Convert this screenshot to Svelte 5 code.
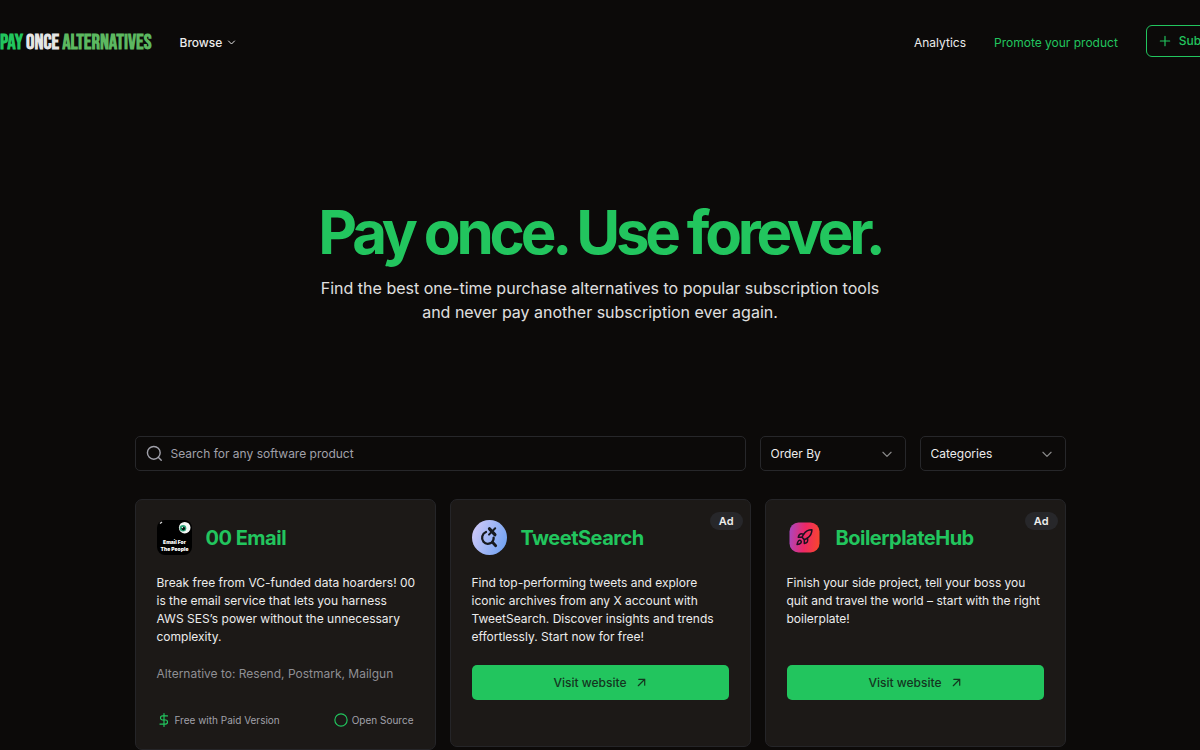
<script lang="ts">
  interface Product {
    name: string;
    logo: 'email' | 'tweet' | 'rocket';
    description: string;
    alternatives?: string;
    pricing?: string;
    openSource?: boolean;
    ad?: boolean;
  }

  const products: Product[] = [
    {
      name: '00 Email',
      logo: 'email',
      description:
        'Break free from VC-funded data hoarders! 00 is the email service that lets you harness AWS SES’s power without the unnecessary complexity.',
      alternatives: 'Resend, Postmark, Mailgun',
      pricing: 'Free with Paid Version',
      openSource: true
    },
    {
      name: 'TweetSearch',
      logo: 'tweet',
      description:
        'Find top-performing tweets and explore iconic archives from any X account with TweetSearch. Discover insights and trends effortlessly. Start now for free!',
      ad: true
    },
    {
      name: 'BoilerplateHub',
      logo: 'rocket',
      description:
        'Finish your side project, tell your boss you quit and travel the world – start with the right boilerplate!',
      ad: true
    }
  ];

  let search = $state('');
  let orderBy = $state('');
  let category = $state('');
</script>

<div class="page">
  <header class="header">
    <a class="brand" href="/"><span class="pay">PAY</span><span class="once">ONCE</span><span class="alt">ALTERNATIVES</span></a>
    <button class="browse" type="button">
      Browse
      <svg width="9" height="9" viewBox="0 0 24 24" class="stroke"><path d="m4 8 8 8 8-8" stroke-width="2.6" /></svg>
    </button>
    <nav class="nav">
      <a class="link" href="/analytics">Analytics</a>
      <a class="link promote" href="/promote">Promote your product</a>
      <a class="submit" href="/submit">
        <svg width="14" height="14" viewBox="0 0 24 24" class="stroke"><path d="M4 12h16M12 4v16" /></svg>
        Submit
      </a>
    </nav>
  </header>

  <main>
    <section class="hero">
      <h1>Pay once. Use forever.</h1>
      <p>Find the best one-time purchase alternatives to popular subscription tools and never pay another subscription ever again.</p>
    </section>

    <div class="filters">
      <label class="search">
        <svg width="17" height="17" viewBox="0 0 24 24" class="stroke"><circle cx="11" cy="11" r="9" /><path d="m21.5 21.5-4.2-4.2" /></svg>
        <input type="text" placeholder="Search for any software product" aria-label="Search" bind:value={search} />
      </label>
      <div class="select">
        <select aria-label="Order By" bind:value={orderBy}>
          <option value="">Order By</option>
          <option value="name">Name</option>
        </select>
        <svg width="14" height="14" viewBox="0 0 24 24" class="stroke"><path d="m5 9 7 7 7-7" /></svg>
      </div>
      <div class="select">
        <select aria-label="Categories" bind:value={category}>
          <option value="">Categories</option>
          <option value="email">Email</option>
        </select>
        <svg width="14" height="14" viewBox="0 0 24 24" class="stroke"><path d="m5 9 7 7 7-7" /></svg>
      </div>
    </div>

    <div class="grid">
      {#each products as product}
        <article class="card">
          {#if product.ad}
            <span class="badge">Ad</span>
          {/if}
          <div class="card-header">
            {#if product.logo === 'email'}
              <svg width="35" height="35" viewBox="0 0 35 35">
                <rect width="35" height="35" rx="8" fill="#000" />
                <path d="M3 3.5 5 2" stroke="#ddd" stroke-width="1.2" />
                <circle cx="27.7" cy="7.7" r="5.8" fill="#f4f7f5" />
                <circle cx="26" cy="8.2" r="3.3" fill="#2fa77c" />
                <circle cx="26.3" cy="8.6" r="1.8" fill="#07130e" />
                <circle cx="25.4" cy="7.6" r="0.7" fill="#fff" />
                <text x="17.5" y="24" class="logo-text">Email For</text>
                <text x="17.5" y="31" class="logo-text">The People</text>
              </svg>
            {:else if product.logo === 'tweet'}
              <svg width="35" height="35" viewBox="0 0 35 35">
                <defs>
                  <linearGradient id="tweet-bg" x1="0" y1="0.3" x2="1" y2="0.7">
                    <stop offset="0" stop-color="#cdc8f8" />
                    <stop offset="1" stop-color="#72a3f2" />
                  </linearGradient>
                </defs>
                <circle cx="17.5" cy="17.5" r="17.5" fill="url(#tweet-bg)" />
                <g fill="none" stroke="#171a20" stroke-width="2.3" stroke-linecap="round">
                  <path d="M14 12a6.3 6.3 0 0 0-2.5 9.8c2.8 3.3 8.4 2.3 9.8-1.8.3-.8.4-1.6.3-2.3" />
                  <path d="m20.5 22.2 3.2 3.5" stroke-width="2.8" />
                  <path d="m17.5 8.8 5.4 5.9" stroke-width="3.2" />
                  <path d="m23.2 8.2-6.2 6.4" stroke-width="2" />
                </g>
              </svg>
            {:else}
              <svg width="35" height="35" viewBox="0 0 35 35">
                <defs>
                  <linearGradient id="rocket-bg" x1="0" y1="0.45" x2="1" y2="0.55">
                    <stop offset="0" stop-color="#ad45bb" />
                    <stop offset="0.5" stop-color="#ed2866" />
                    <stop offset="1" stop-color="#f8452f" />
                  </linearGradient>
                </defs>
                <rect x="2.5" y="2.5" width="30" height="30" rx="9" fill="url(#rocket-bg)" />
                <g transform="translate(8.2 8.2) scale(0.76)" fill="none" stroke="#1c1020" stroke-width="2" stroke-linecap="round" stroke-linejoin="round">
                  <path d="M4.5 16.5c-1.5 1.26-2 5-2 5s3.74-.5 5-2c.71-.84.7-2.13-.09-2.91a2.18 2.18 0 0 0-2.91-.09z" />
                  <path d="m12 15-3-3a22 22 0 0 1 2-3.95A12.88 12.88 0 0 1 22 2c0 2.72-.78 7.5-6 11a22.35 22.35 0 0 1-4 2z" />
                  <path d="M9 12H4s.55-3.03 2-4c1.62-1.08 5 0 5 0" />
                  <path d="M12 15v5s3.03-.55 4-2c1.08-1.62 0-5 0-5" />
                </g>
              </svg>
            {/if}
            <h2>{product.name}</h2>
          </div>

          <p class="description">{product.description}</p>

          {#if product.ad}
            <a class="visit" href="/visit">
              Visit website
              <svg width="11" height="11" viewBox="0 0 24 24" class="stroke"><path d="M5 19 19 5M6 5h13v13" stroke-width="2.6" /></svg>
            </a>
          {:else}
            <p class="alternatives">Alternative to: {product.alternatives}</p>
            <div class="meta">
              <span>
                <svg width="14" height="14" viewBox="0 0 24 24" class="stroke"><path d="M12 1v22M18 5H9.5a3.5 3.5 0 0 0 0 7h5a3.5 3.5 0 0 1 0 7H5" /></svg>
                {product.pricing}
              </span>
              {#if product.openSource}
                <span>
                  <svg width="14" height="14" viewBox="0 0 24 24" class="stroke"><circle cx="12" cy="12" r="10.5" /></svg>
                  Open Source
                </span>
              {/if}
            </div>
          {/if}
        </article>
      {/each}
    </div>
  </main>
</div>

<style>
  :global(body) {
    background: #0c0a09;
  }

  .page {
    overflow: hidden;
    color: #ececec;
    font-family: Inter, sans-serif;
    font-size: 12px;
    line-height: 18px;
  }

  a {
    color: inherit;
    text-decoration: none;
  }

  h1,
  h2,
  p {
    margin: 0;
  }

  button,
  input,
  select {
    color: inherit;
    font: inherit;
    background: none;
    border: none;
    padding: 0;
  }

  svg {
    flex: none;
  }

  .stroke {
    fill: none;
    stroke: currentColor;
    stroke-width: 2;
    stroke-linecap: round;
    stroke-linejoin: round;
  }

  /* Header runs past the right edge of the window */
  .header {
    display: flex;
    align-items: center;
    gap: 28px;
    padding: 25px 0;
    margin-right: -31px;
    white-space: nowrap;
  }

  .brand,
  .browse,
  .link {
    padding-top: 3px;
  }

  .brand {
    display: flex;
    gap: 3px;
    font-family: 'Bebas Neue', 'Roboto Condensed', 'Liberation Sans Narrow', Roboto, sans-serif;
    font-size: 21px;
    font-weight: 700;
  }

  .pay {
    color: #22c55e;
  }

  .once {
    color: #e5e5e5;
  }

  .alt {
    color: #5cb860;
  }

  .browse {
    display: flex;
    align-items: center;
    gap: 5px;
    font-weight: 500;
  }

  .nav {
    display: flex;
    align-items: center;
    gap: 28px;
    margin-left: auto;
  }

  .promote {
    color: #22c55e;
  }

  .submit {
    display: flex;
    align-items: center;
    gap: 7px;
    height: 30px;
    padding: 0 11px;
    border: 1px solid #22c55e;
    border-radius: 6px;
    color: #22c55e;
    font-weight: 500;
  }

  main {
    max-width: 931px;
    margin: 0 auto;
    padding-bottom: 28px;
  }

  .hero {
    padding: 120px 0 112px;
    text-align: center;
  }

  .hero h1 {
    color: #22c55e;
    font-size: 60px;
    font-weight: 700;
    line-height: 60px;
    letter-spacing: -0.07em;
  }

  .hero p {
    max-width: 580px;
    margin: 14px auto 0;
    color: #e0e0e0;
    font-size: 16px;
    line-height: 24px;
  }

  .filters {
    display: flex;
    gap: 14px;
    margin-bottom: 28px;
  }

  .search,
  .select {
    display: flex;
    align-items: center;
    box-sizing: border-box;
    height: 35px;
    border: 1px solid #27272a;
    border-radius: 5px;
  }

  .search {
    flex: 1;
    gap: 8px;
    padding: 0 10px;
    color: #a1a1aa;
  }

  .search input {
    flex: 1;
    outline: none;
  }

  .search input::placeholder {
    color: #a1a1aa;
    opacity: 1;
  }

  .select {
    display: grid;
    width: 146px;
  }

  .select select,
  .select svg {
    grid-area: 1 / 1;
  }

  .select select {
    width: 100%;
    height: 33px;
    padding: 0 10px;
    appearance: none;
    outline: none;
  }

  .select svg {
    justify-self: end;
    margin-right: 11px;
    color: #8a8a8a;
    pointer-events: none;
  }

  .grid {
    display: grid;
    grid-template-columns: repeat(3, 1fr);
    align-items: start;
    gap: 14px;
  }

  .card {
    position: relative;
    padding: 20px 21px;
    background: #1c1917;
    border: 1px solid #252528;
    border-radius: 7px;
  }

  .badge {
    position: absolute;
    top: 12px;
    right: 7px;
    padding: 0 9px;
    border-radius: 10px;
    background: #27272a;
    font-size: 11px;
    font-weight: 600;
  }

  .card-header {
    display: flex;
    align-items: center;
    gap: 14px;
    margin-bottom: 19px;
  }

  .card-header h2 {
    color: #22c55e;
    font-size: 20px;
    font-weight: 700;
    line-height: 28px;
    letter-spacing: -0.025em;
  }

  .logo-text {
    fill: #fff;
    font-size: 5px;
    font-weight: 900;
    text-anchor: middle;
  }

  .description {
    min-height: 72px;
    margin-right: -3px;
  }

  .alternatives {
    margin-top: 19px;
    color: #8f8f94;
  }

  .meta {
    display: flex;
    justify-content: space-between;
    margin-top: 28px;
    color: #a1a1aa;
    font-size: 10px;
  }

  .meta span {
    display: flex;
    align-items: center;
    gap: 4px;
  }

  .meta svg {
    color: #22c55e;
  }

  .visit {
    display: flex;
    align-items: center;
    justify-content: center;
    gap: 9px;
    height: 35px;
    margin: 19px 0 26px;
    border-radius: 5px;
    background: #22c55e;
    color: #14361f;
    font-weight: 500;
  }

  @media (max-width: 960px) {
    main {
      padding: 0 16px 28px;
    }

    .grid {
      grid-template-columns: repeat(2, 1fr);
    }
  }

  @media (max-width: 640px) {
    .filters {
      flex-wrap: wrap;
    }

    .search {
      flex-basis: 100%;
    }

    .grid {
      grid-template-columns: 1fr;
    }
  }
</style>
